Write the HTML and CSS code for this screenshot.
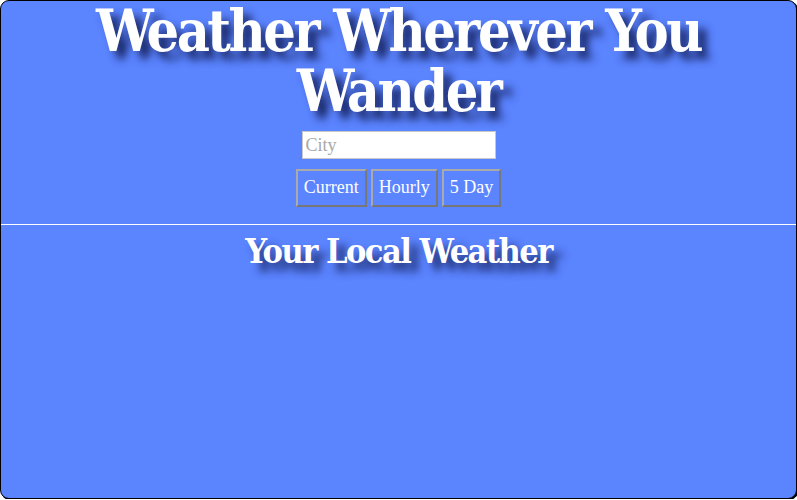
FILE: index.html
```html
<!DOCTYPE html>
<html>
<head>
<meta charset="utf-8">
<link rel="stylesheet" href="styles.css">
</head>
<body>
<div class="page">
  <header class="top">
    <h1 class="title">Weather Wherever You Wander</h1>
    <input class="city" type="text" placeholder="City">
    <div class="buttons">
      <button class="btn">Current</button>
      <button class="btn">Hourly</button>
      <button class="btn">5 Day</button>
    </div>
  </header>
  <main class="local">
    <h2 class="subtitle">Your Local Weather</h2>
  </main>
</div>
</body>
</html>
```
FILE: styles.css
```css
html, body {
  margin: 0;
  padding: 0;
  background: #fff;
}
.page {
  box-sizing: border-box;
  width: 797px;
  height: 499px;
  background: #5b84ff;
  border: 1px solid #000;
  border-radius: 9px;
  box-shadow: 1px 1px 0 #000;
  overflow: hidden;
  display: flex;
  flex-direction: column;
}
.top {
  display: flex;
  flex-direction: column;
  align-items: center;
  border-bottom: 1px solid #fff;
  padding-bottom: 17px;
}
.title {
  margin: 0;
  width: 660px;
  text-align: center;
  font-family: "DejaVu Serif Condensed", "DejaVu Serif", serif;
  font-stretch: condensed;
  font-weight: bold;
  font-size: 57px;
  letter-spacing: -2.5px;
  line-height: 60px;
  color: #fff;
  text-shadow: 8px 8px 8px rgba(15, 25, 80, 0.9);
}
.city {
  box-sizing: border-box;
  margin-top: 10px;
  width: 194px;
  height: 28px;
  border: 1px solid #c8c8c8;
  outline: none;
  background: #fff;
  font-family: "Liberation Serif", serif;
  font-size: 18px;
  padding: 1px 3px;
}
.city::placeholder {
  color: #a9a9a9;
}
.buttons {
  display: flex;
  gap: 4px;
  margin-top: 10px;
}
.btn {
  box-sizing: border-box;
  height: 38px;
  padding: 0 6px 2px;
  background: #5b84ff;
  color: #fff;
  font-family: "Liberation Serif", serif;
  font-size: 18px;
  border: 2px solid;
  border-color: #aaa #777 #777 #aaa;
}
.local {
  flex: 1;
  display: flex;
  flex-direction: column;
  align-items: center;
}
.subtitle {
  margin: 5px 0 0;
  font-family: "DejaVu Serif Condensed", "DejaVu Serif", serif;
  font-stretch: condensed;
  font-weight: bold;
  font-size: 34px;
  letter-spacing: -1.5px;
  line-height: 42px;
  color: #fff;
  text-shadow: 8px 8px 8px rgba(15, 25, 80, 0.9);
}
```
